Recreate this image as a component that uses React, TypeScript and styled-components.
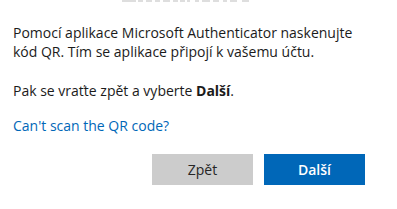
import React from "react";
import styled, { createGlobalStyle } from "styled-components";

const Global = createGlobalStyle`
  html, body { margin: 0; padding: 0; background: #ffffff; }
  body { font-family: "Open Sans", "Noto Sans", "Liberation Sans", sans-serif; }
`;

const Page = styled.div`
  width: 397px;
  height: 209px;
  overflow: hidden;
  box-sizing: border-box;
  padding: 0 32px 0 13px;
  display: flex;
  flex-direction: column;
  color: #1b1b1b;
  font-size: 14px;
  line-height: 19px;
`;

const TitleEdge = styled.svg`
  display: block;
  width: 352px;
  height: 3px;
  flex: none;
`;

const Para = styled.p`
  margin: 0;
  & + & { margin-top: 20px; }
`;

const Body = styled.div`
  margin-top: 20px;
  display: flex;
  flex-direction: column;
`;

const Link = styled.a`
  margin-top: 16px;
  color: #0067b8;
  text-decoration: none;
  font-size: 14px;
  line-height: 19px;
`;

const Actions = styled.div`
  margin-top: 19px;
  display: flex;
  justify-content: flex-end;
  gap: 11px;
`;

const Button = styled.button<{ $primary?: boolean }>`
  width: 101px;
  height: 31px;
  border: none;
  padding: 0;
  font-family: inherit;
  font-size: 14px;
  font-weight: ${(p) => (p.$primary ? 600 : 400)};
  background: ${(p) => (p.$primary ? "#0067b8" : "#cccccc")};
  color: ${(p) => (p.$primary ? "#ffffff" : "#262626")};
  cursor: pointer;
`;

const segments: [number, number][] = [
  [122, 136], [138, 143], [146, 152], [155, 160], [163, 170], [173, 178],
  [180, 185], [187, 190], [195, 199], [202, 210], [213, 219], [223, 227],
  [230, 237], [242, 249],
];

export default function App() {
  return (
    <>
      <Global />
      <Page>
        <TitleEdge viewBox="13 0 352 3" aria-hidden="true">
          {segments.map(([a, b]) => (
            <rect key={a} x={a} y={0} width={b - a} height={2} fill="#dedede" />
          ))}
        </TitleEdge>
        <Body>
          <Para>
            Pomocí aplikace Microsoft Authenticator naskenujte kód QR. Tím se aplikace připojí k vašemu účtu.
          </Para>
          <Para>
            Pak se vraťte zpět a vyberte <b>Další</b>.
          </Para>
        </Body>
        <Link href="#">Can't scan the QR code?</Link>
        <Actions>
          <Button>Zpět</Button>
          <Button $primary>Další</Button>
        </Actions>
      </Page>
    </>
  );
}
